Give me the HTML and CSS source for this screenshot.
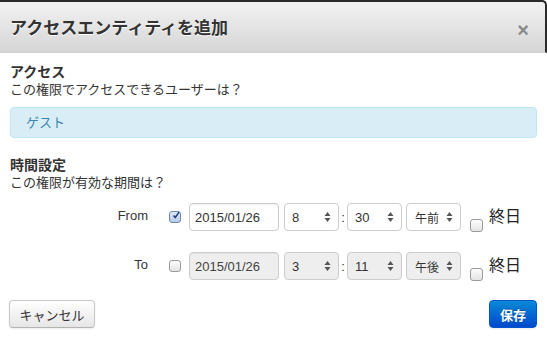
FILE: index.html
```html
<!DOCTYPE html>
<html lang="ja">
  <head>
    <meta charset="UTF-8" />
    <meta name="viewport" content="width=device-width, initial-scale=1.0" />
    <link rel="stylesheet" href="styles.css">
    <title>アクセスエンティティを追加</title>
  </head>
  <body>
    <div class="modal">
      <header class="modal-header">
        <h1>アクセスエンティティを追加</h1>
        <span class="close">×</span>
      </header>

      <main class="modal-body">
        <h3>アクセス</h3>
        <p class="sub">この権限でアクセスできるユーザーは？</p>
        <div class="alert">ゲスト</div>

        <h3 class="time-title">時間設定</h3>
        <p class="sub">この権限が有効な期間は？</p>

        <div class="row">
          <label class="row-label">From</label>
          <span class="check checked">
            <svg width="13" height="13" viewBox="0 0 13 13"><path d="M2.5 6.5 L5.3 9.8 L11.5 1" fill="none" stroke="#1f3f77" stroke-width="2.4"/></svg>
          </span>
          <input class="date" type="text" value="2015/01/26" title="from" />
          <div class="select w-num"><span>8</span><svg class="arrows" width="7" height="12" viewBox="0 0 7 12"><path d="M3.5 1 L6.5 5 H0.5 Z M3.5 11 L6.5 7 H0.5 Z" fill="#555"/></svg></div>
          <span class="colon">:</span>
          <div class="select w-num"><span>30</span><svg class="arrows" width="7" height="12" viewBox="0 0 7 12"><path d="M3.5 1 L6.5 5 H0.5 Z M3.5 11 L6.5 7 H0.5 Z" fill="#555"/></svg></div>
          <div class="select w-ampm"><span class="ampm">午前</span><svg class="arrows" width="7" height="12" viewBox="0 0 7 12"><path d="M3.5 1 L6.5 5 H0.5 Z M3.5 11 L6.5 7 H0.5 Z" fill="#555"/></svg></div>
          <span class="check allday"></span>
          <span class="allday-text">終日</span>
        </div>

        <div class="row row-to">
          <label class="row-label">To</label>
          <span class="check"></span>
          <input class="date" type="text" value="2015/01/26" title="to" disabled />
          <div class="select w-num disabled"><span>3</span><svg class="arrows" width="7" height="12" viewBox="0 0 7 12"><path d="M3.5 1 L6.5 5 H0.5 Z M3.5 11 L6.5 7 H0.5 Z" fill="#555"/></svg></div>
          <span class="colon">:</span>
          <div class="select w-num disabled"><span>11</span><svg class="arrows" width="7" height="12" viewBox="0 0 7 12"><path d="M3.5 1 L6.5 5 H0.5 Z M3.5 11 L6.5 7 H0.5 Z" fill="#555"/></svg></div>
          <div class="select w-ampm disabled"><span class="ampm">午後</span><svg class="arrows" width="7" height="12" viewBox="0 0 7 12"><path d="M3.5 1 L6.5 5 H0.5 Z M3.5 11 L6.5 7 H0.5 Z" fill="#555"/></svg></div>
          <span class="check allday"></span>
          <span class="allday-text">終日</span>
        </div>
      </main>

      <footer class="modal-footer">
        <button class="btn">キャンセル</button>
        <button class="btn btn-primary">保存</button>
      </footer>
    </div>
  </body>
</html>
```

FILE: styles.css
```css
* {
  margin: 0;
  padding: 0;
  box-sizing: border-box;
}

body {
  font-family: "Liberation Sans", "Noto Sans CJK JP", sans-serif;
  color: #333;
  background-color: #fff;
  font-size: 13px;
}

.modal {
  width: 547px;
  height: 340px;
  background: #fff;
}

/* HEADER */
.modal-header {
  height: 53px;
  display: flex;
  align-items: center;
  justify-content: space-between;
  padding: 0 16px 0 10px;
  border-top: 2px solid #2b2b2b;
  border-right: 2px solid #2b2b2b;
  border-bottom: 1px solid #cfcfcf;
  background: linear-gradient(#f2f2f2, #d6d6d6);
  border-top-right-radius: 5px;
}

.modal-header h1 {
  font-size: 17px;
  font-weight: bold;
  color: #333;
  text-shadow: 0 1px 0 #fff;
  margin-top: -2px;
}

.close {
  font-size: 20px;
  font-weight: bold;
  color: #8a8a8a;
  margin-top: 6px;
}

/* BODY */
.modal-body {
  padding: 11px 10px 0 10px;
}

h3 {
  font-size: 14px;
  font-weight: bold;
  line-height: 17px;
}

.sub {
  font-size: 13px;
  line-height: 17px;
}

.alert {
  margin-top: 9px;
  height: 31px;
  line-height: 29px;
  padding: 0 15px;
  background: #d9edf7;
  border: 1px solid #bce8f1;
  border-radius: 4px;
  color: #3a87ad;
}

.time-title {
  margin-top: 19px;
}

.row {
  display: flex;
  align-items: center;
  height: 28px;
  margin-top: 12px;
}

.row-to {
  margin-top: 21px;
}

.row-label {
  width: 138px;
  text-align: right;
  font-size: 13px;
  margin-right: 21px;
  margin-top: -3px;
}

.check {
  width: 12px;
  height: 12px;
  border: 1px solid #9a9a9a;
  border-radius: 3px;
  background: linear-gradient(#fdfdfd, #e4e4e4);
  display: inline-flex;
  align-items: center;
  justify-content: center;
  margin-right: 8px;
}

.check.checked {
  background: linear-gradient(#dfe9f8, #b7cbe9);
  border-color: #6d86ae;
}

.check svg {
  margin-top: -3px;
  margin-left: 2px;
}

.date {
  width: 90px;
  height: 28px;
  border: 1px solid #ccc;
  border-radius: 4px;
  padding: 0 5px;
  font-family: inherit;
  font-size: 13px;
  color: #333;
  margin-right: 5px;
  box-shadow: inset 0 1px 1px rgba(0, 0, 0, 0.06);
}

.date:disabled {
  background: #eee;
  color: #444;
}

.select {
  height: 28px;
  border: 1px solid #ccc;
  border-radius: 4px;
  background: #fff;
  display: flex;
  align-items: center;
  justify-content: space-between;
  padding: 0 7px 0 7px;
}

.select.disabled {
  background: #eee;
}

.w-num {
  width: 55px;
}

.w-ampm {
  width: 55px;
  margin-left: 4px;
  padding-left: 8px;
}

.ampm {
  font-size: 12px;
}

.colon {
  width: 8px;
  text-align: center;
}

.allday {
  align-self: flex-end;
  width: 13px;
  height: 13px;
  margin-left: 9px;
  margin-right: 6px;
  margin-bottom: -1px;
}

.allday-text {
  font-size: 16px;
  color: #222;
  margin-top: -5px;
}

/* FOOTER */
.modal-footer {
  display: flex;
  justify-content: space-between;
  padding: 0 10px 0 9px;
  margin-top: 20px;
}

.btn {
  height: 28px;
  padding: 0;
  font-family: inherit;
  font-size: 13px;
  color: #333;
  white-space: nowrap;
  border: 1px solid #c8c8c8;
  border-bottom-color: #b3b3b3;
  border-radius: 4px;
  background: linear-gradient(#ffffff, #e6e6e6);
  box-shadow: 0 1px 2px rgba(0, 0, 0, 0.08);
  width: 86px;
}

.btn-primary {
  width: 48px;
  color: #fff;
  font-weight: bold;
  border-color: #0055cc;
  background: linear-gradient(#0a8ad6, #0048cc);
  text-shadow: 0 -1px 0 rgba(0, 0, 0, 0.25);
}
```
